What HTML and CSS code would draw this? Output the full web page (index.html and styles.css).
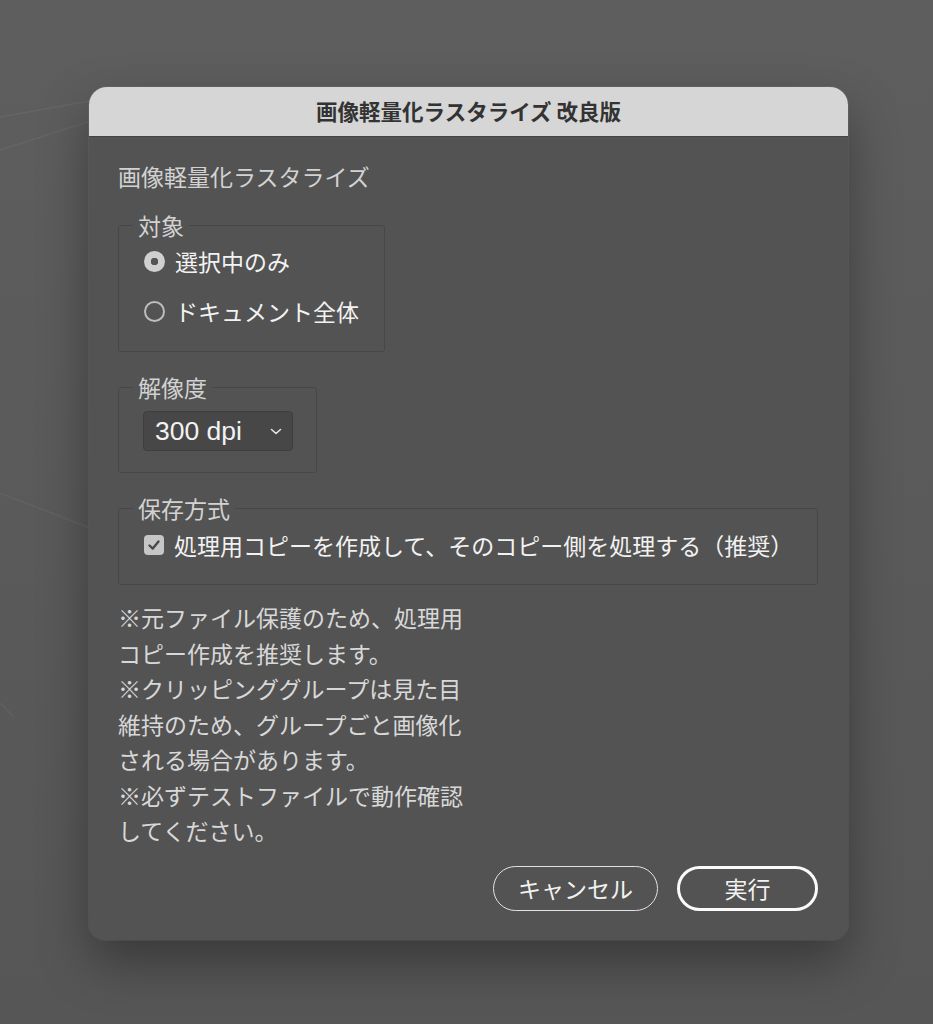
FILE: index.html
```html
<!DOCTYPE html>
<html lang="ja">
<head>
  <meta charset="UTF-8">
  <title>画像軽量化ラスタライズ 改良版</title>
  <link rel="stylesheet" href="styles.css">
</head>
<body>

  <svg class="backdrop" width="933" height="1024" viewBox="0 0 933 1024">
    <line x1="0" y1="117" x2="95" y2="100" />
    <line x1="0" y1="150" x2="100" y2="118" />
    <line x1="0" y1="493" x2="90" y2="528" />
    <line x1="0" y1="703" x2="14" y2="717" />
  </svg>

  <div class="dialog">
    <div class="titlebar">画像軽量化ラスタライズ 改良版</div>

    <div class="dialog-body">
      <div class="subtitle">画像軽量化ラスタライズ</div>

      <fieldset class="group group-target">
        <legend>対象</legend>
        <label class="option">
          <span class="radio checked"></span>選択中のみ
        </label>
        <label class="option">
          <span class="radio"></span>ドキュメント全体
        </label>
      </fieldset>

      <fieldset class="group group-resolution">
        <legend>解像度</legend>
        <div class="select">
          <span>300 dpi</span>
          <svg class="chevron" width="14" height="9" viewBox="0 0 14 9"><path d="M2.5 2.5 L7 6.5 L11.5 2.5" /></svg>
        </div>
      </fieldset>

      <fieldset class="group group-save">
        <legend>保存方式</legend>
        <label class="option">
          <span class="checkbox">
            <svg width="20" height="20" viewBox="0 0 20 20"><path d="M5.5 10.5 L8.8 13.6 L14.5 6.5" /></svg>
          </span>処理用コピーを作成して、そのコピー側を処理する（推奨）
        </label>
      </fieldset>

      <div class="notes">
        ※元ファイル保護のため、処理用<br>
        コピー作成を推奨します。<br>
        ※クリッピンググループは見た目<br>
        維持のため、グループごと画像化<br>
        される場合があります。<br>
        ※必ずテストファイルで動作確認<br>
        してください。
      </div>

      <div class="actions">
        <button class="btn">キャンセル</button>
        <button class="btn btn-primary">実行</button>
      </div>
    </div>
  </div>

</body>
</html>
```

FILE: styles.css
```css
body {
  font-family: "Noto Sans CJK JP", "Noto Sans", sans-serif;
  background: linear-gradient(to bottom, #5e5e5e, #565656);
  color: #e6e6e6;
  margin: 0;
  padding: 87px 0 0 89px;
  height: 1024px;
  box-sizing: border-box;
  overflow: hidden;
  position: relative;
}
.backdrop {
  position: absolute;
  left: 0;
  top: 0;
}
.backdrop line {
  stroke: rgba(255, 255, 255, 0.05);
  stroke-width: 1.5;
}
.dialog {
  position: relative;
  width: 759px;
  background-color: #535353;
  border-radius: 18px 18px 16px 16px;
  overflow: hidden;
  box-shadow: 0 0 0 1px rgba(255, 255, 255, 0.06), 0 22px 50px rgba(0, 0, 0, 0.35);
}
.titlebar {
  height: 50px;
  background-color: #d6d6d6;
  color: #333;
  font-size: 21.5px;
  font-weight: bold;
  line-height: 48px;
  text-align: center;
  border-bottom: 1px solid #444;
  box-sizing: border-box;
}
.dialog-body {
  padding: 25px 30px 29px 29px;
}
.subtitle {
  font-size: 23px;
  line-height: 32px;
  margin-top: -2px;
  color: #d2d2d2;
}
.group {
  margin: 0;
  padding: 0 10px 0 25px;
  border: 1px solid #474747;
  border-radius: 3px;
  min-width: 0;
}
.group legend {
  font-size: 23px;
  line-height: 32px;
  color: #d2d2d2;
  padding: 0 5px;
  margin-left: -11px;
}
.group-target {
  width: 267px;
  box-sizing: border-box;
  margin-top: 17px;
  padding-top: 4px;
  padding-bottom: 24px;
  display: flex;
  flex-direction: column;
  gap: 18px;
}
.group-resolution {
  width: 199px;
  box-sizing: border-box;
  margin-top: 19px;
  padding-top: 8px;
  padding-bottom: 21px;
  padding-left: 24px;
}
.group-resolution legend {
  margin-left: -10px;
}
.group-save {
  width: 700px;
  box-sizing: border-box;
  margin-top: 19px;
  padding-top: 5px;
  padding-bottom: 23px;
}
.option {
  display: flex;
  align-items: center;
  gap: 10px;
  font-size: 23px;
  line-height: 32px;
  color: #f2f2f2;
}
.radio {
  width: 21px;
  height: 21px;
  border-radius: 50%;
  border: 2px solid #bdbdbd;
  box-sizing: border-box;
  flex: none;
}
.radio.checked {
  border: none;
  background: radial-gradient(circle, #555 0 3.5px, #d0d0d0 4px);
}
.checkbox {
  width: 20px;
  height: 20px;
  border-radius: 4px;
  background-color: #c6c6c6;
  flex: none;
  display: flex;
}
.checkbox path {
  fill: none;
  stroke: #4a4a4a;
  stroke-width: 2.4;
  stroke-linecap: round;
  stroke-linejoin: round;
}
.select {
  width: 150px;
  height: 40px;
  box-sizing: border-box;
  background-color: #474747;
  border: 1px solid #3e3e3e;
  border-radius: 4px;
  display: flex;
  align-items: center;
  justify-content: space-between;
  padding: 0 9px 0 11px;
  font-family: "Liberation Sans", Arial, sans-serif;
  font-size: 26.5px;
  color: #f2f2f2;
}
.chevron path {
  fill: none;
  stroke: #e6e6e6;
  stroke-width: 1.6;
  stroke-linecap: round;
  stroke-linejoin: round;
}
.notes {
  margin-top: 15px;
  font-size: 23px;
  line-height: 35.5px;
  color: #d8d8d8;
}
.actions {
  margin-top: 17px;
  display: flex;
  justify-content: flex-end;
  gap: 19px;
}
.btn {
  font-family: "Noto Sans CJK JP", "Noto Sans", sans-serif;
  font-size: 23px;
  color: #f2f2f2;
  background: transparent;
  border: 1.5px solid #e2e2e2;
  border-radius: 23px;
  height: 45px;
  width: 165px;
  padding: 0;
  cursor: pointer;
}
.btn-primary {
  width: 141px;
  border: 3px solid #fafafa;
}
```
